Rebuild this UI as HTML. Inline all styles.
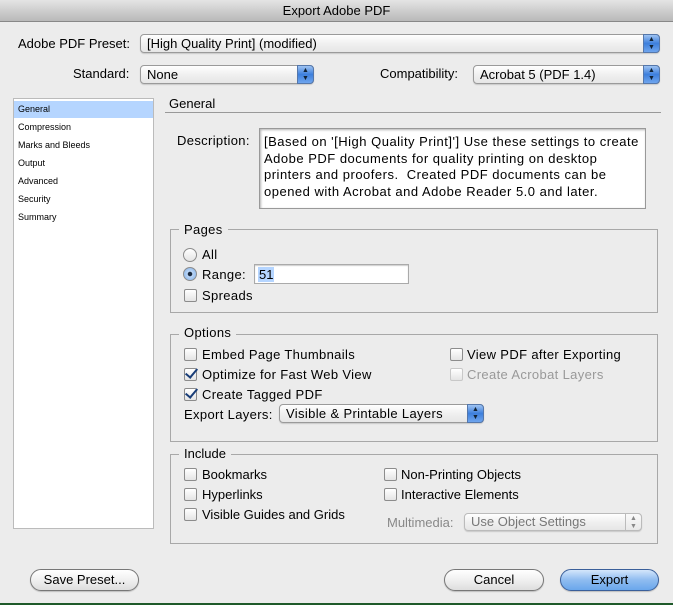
<!DOCTYPE html>
<html><head><meta charset="utf-8"><style>
*{margin:0;padding:0;box-sizing:border-box}
body{width:673px;height:605px;background:#ececec;font-family:"Liberation Sans",sans-serif;font-size:13px;color:#000;position:relative;overflow:hidden}
.a{position:absolute;white-space:nowrap}
.ls{letter-spacing:.35px}
.title{left:0;top:0;width:673px;height:22px;background:linear-gradient(#e4e4e4,#b9b9b9);border-bottom:1px solid #888;text-align:center;line-height:22px;font-size:13px}
.sel{position:absolute;height:19px;border:1px solid #9a9a9a;border-radius:4px;background:linear-gradient(#fff,#f0f0f0 50%,#e6e6e6);line-height:17px;padding-left:6px;box-shadow:0 1px 1px rgba(0,0,0,.15)}
.sel .ar{position:absolute;right:-1px;top:-1px;width:17px;height:19px;border-radius:0 4px 4px 0;background:linear-gradient(#9ec3f2,#3d7fdc 50%,#6fa5ee);border:1px solid #5577aa;color:#123;font-size:7px;line-height:8px;text-align:center;padding-top:1px;letter-spacing:0}
.sel.dis{color:#777;border-color:#bbb}
.sel.dis .ar{background:linear-gradient(#fafafa,#e8e8e8);border-color:#bbb;color:#888}
.box{position:absolute;border:1px solid #a8a8a8}
.leg{position:absolute;background:#ececec;padding:0 5px}
.cb{position:absolute;width:13px;height:13px;border:1px solid #8c8c8c;border-radius:2px;background:linear-gradient(#fff,#e4e4e4)}
.cb.ck::after{content:"";position:absolute;left:3px;top:-3px;width:5px;height:10px;border:solid #1a3e78;border-width:0 2.5px 2.5px 0;transform:rotate(40deg)}
.cb.dis{border-color:#c8c8c8}
.rd{position:absolute;width:14px;height:14px;border:1px solid #8c8c8c;border-radius:50%;background:linear-gradient(#fff,#e4e4e4)}
.rd.on{background:radial-gradient(circle,#1a2a40 2px,#bcd6f6 2.5px,#7fafe8)}
.lst{left:13px;top:98px;width:141px;height:431px;background:#fff;border:1px solid #bbb}
.lst div{position:absolute;left:4px;font-size:9px}
.btn{position:absolute;height:22px;border:1px solid #777;border-radius:11px;background:linear-gradient(#fff,#f0f0f0 50%,#dedede);text-align:center;line-height:20px;font-size:13px;box-shadow:0 1px 1px rgba(0,0,0,.2)}
</style></head><body>
<div class="a title">Export Adobe PDF</div>

<div class="a" style="left:18px;top:36px">Adobe PDF Preset:</div>
<div class="sel" style="left:140px;top:34px;width:520px">[High Quality Print] (modified)<div class="ar">▲<br>▼</div></div>
<div class="a" style="left:73px;top:66px">Standard:</div>
<div class="sel" style="left:140px;top:65px;width:174px">None<div class="ar">▲<br>▼</div></div>
<div class="a" style="left:380px;top:66px">Compatibility:</div>
<div class="sel" style="left:473px;top:65px;width:187px">Acrobat 5 (PDF 1.4)<div class="ar">▲<br>▼</div></div>

<div class="a lst">
<div style="left:0;top:2px;width:139px;height:17px;background:#b5d5ff"></div>
<div style="top:5px">General</div>
<div style="top:23px">Compression</div>
<div style="top:41px">Marks and Bleeds</div>
<div style="top:59px">Output</div>
<div style="top:77px">Advanced</div>
<div style="top:95px">Security</div>
<div style="top:113px">Summary</div>
</div>

<div class="a" style="left:169px;top:96px">General</div>
<div class="a" style="left:165px;top:112px;width:496px;height:1px;background:#999"></div>

<div class="a ls" style="left:177px;top:133px">Description:</div>
<div class="a" style="left:259px;top:128px;width:387px;height:81px;background:#fff;border:1px solid #999;box-shadow:inset 1px 1px 2px rgba(0,0,0,.3);padding:5px 4px;line-height:16.5px;white-space:normal;letter-spacing:.5px">[Based on '[High Quality Print]'] Use these settings to create Adobe PDF documents for quality printing on desktop printers and proofers.&nbsp; Created PDF documents can be opened with Acrobat and Adobe Reader 5.0 and later.</div>

<div class="box" style="left:170px;top:229px;width:488px;height:84px"></div>
<div class="leg a ls" style="left:179px;top:222px">Pages</div>
<div class="rd" style="left:183px;top:248px"></div><div class="a ls" style="left:202px;top:247px">All</div>
<div class="rd on" style="left:183px;top:267px"></div><div class="a ls" style="left:202px;top:267px">Range:</div>
<div class="a" style="left:254px;top:264px;width:155px;height:20px;background:#fff;border:1px solid #aaa;box-shadow:inset 0 1px 1px rgba(0,0,0,.2)"><span style="position:absolute;left:3px;top:2px;background:#b5d5ff;padding:0 1px">51</span></div>
<div class="cb" style="left:184px;top:289px"></div><div class="a ls" style="left:202px;top:288px">Spreads</div>

<div class="box" style="left:170px;top:334px;width:488px;height:108px"></div>
<div class="leg a ls" style="left:179px;top:325px">Options</div>
<div class="cb" style="left:184px;top:348px"></div><div class="a ls" style="left:202px;top:347px">Embed Page Thumbnails</div>
<div class="cb ck" style="left:184px;top:368px"></div><div class="a ls" style="left:202px;top:367px">Optimize for Fast Web View</div>
<div class="cb ck" style="left:184px;top:388px"></div><div class="a ls" style="left:202px;top:387px">Create Tagged PDF</div>
<div class="cb" style="left:450px;top:348px"></div><div class="a ls" style="left:467px;top:347px">View PDF after Exporting</div>
<div class="cb dis" style="left:450px;top:368px"></div><div class="a ls" style="left:467px;top:367px;color:#999">Create Acrobat Layers</div>
<div class="a ls" style="left:184px;top:407px">Export Layers:</div>
<div class="sel ls" style="left:279px;top:404px;width:205px">Visible &amp; Printable Layers<div class="ar">▲<br>▼</div></div>

<div class="box" style="left:170px;top:454px;width:488px;height:90px"></div>
<div class="leg a" style="left:179px;top:446px">Include</div>
<div class="cb" style="left:184px;top:468px"></div><div class="a" style="left:202px;top:467px">Bookmarks</div>
<div class="cb" style="left:184px;top:488px"></div><div class="a" style="left:202px;top:487px">Hyperlinks</div>
<div class="cb" style="left:184px;top:508px"></div><div class="a" style="left:202px;top:507px">Visible Guides and Grids</div>
<div class="cb" style="left:384px;top:468px"></div><div class="a" style="left:401px;top:467px">Non-Printing Objects</div>
<div class="cb" style="left:384px;top:488px"></div><div class="a" style="left:401px;top:487px">Interactive Elements</div>
<div class="a" style="left:387px;top:515px;color:#888">Multimedia:</div>
<div class="sel dis" style="left:464px;top:513px;width:178px;height:18px;line-height:16px">Use Object Settings<div class="ar" style="height:18px">▲<br>▼</div></div>

<div class="btn" style="left:30px;top:569px;width:109px">Save Preset...</div>
<div class="btn" style="left:444px;top:569px;width:100px">Cancel</div>
<div class="btn" style="left:560px;top:569px;width:99px;border-color:#3a5f9a;background:linear-gradient(#d4e6fb,#8fbcf0 50%,#6aa7ec)">Export</div>
<div class="a" style="left:0;top:603px;width:673px;height:2px;background:#1f5a2a"></div>
</body></html>
